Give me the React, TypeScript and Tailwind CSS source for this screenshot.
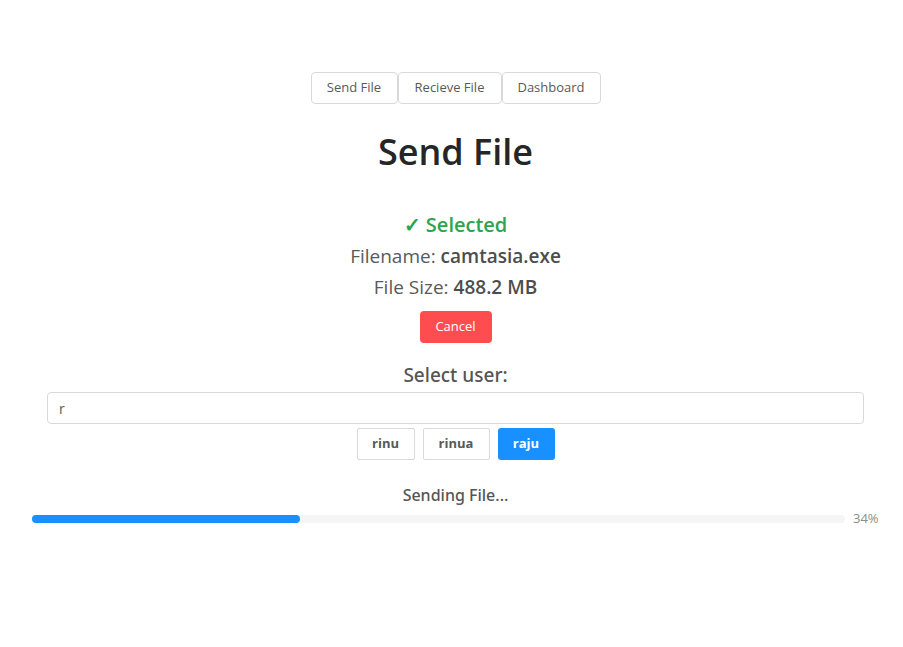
import React from "react";

export default function App() {
  const font = { fontFamily: '"Open Sans", "Noto Sans", sans-serif' };
  return (
    <div className="min-h-[647px] w-[903px] bg-white text-[#595959]" style={font}>
      <div className="flex flex-col items-center pl-[47px] pr-[39px] pt-[72px]">
        <div className="flex">
          <button className="h-[32px] w-[87px] rounded-[4px] border border-[#d9d9d9] bg-white text-[13px] text-[#595959]">Send File</button>
          <button className="h-[32px] w-[104px] rounded-[4px] border border-[#d9d9d9] bg-white text-[13px] text-[#595959]">Recieve File</button>
          <button className="h-[32px] w-[99px] rounded-[4px] border border-[#d9d9d9] bg-white text-[13px] text-[#595959]">Dashboard</button>
        </div>
        <h1 className="mt-[26px] text-[36px] font-semibold leading-[44px] text-[#262626]">Send File</h1>
        <div className="mt-[36px] text-[20px] font-semibold leading-[30px] text-[#2ea44f]">✓ Selected</div>
        <div className="mt-[1px] text-[19px] leading-[31px]">
          Filename: <span className="font-semibold text-[#4d4d4d]">camtasia.exe</span>
        </div>
        <div className="text-[19px] leading-[31px]">
          File Size: <span className="font-semibold text-[#4d4d4d]">488.2 MB</span>
        </div>
        <button className="mt-[8px] h-[32px] w-[72px] rounded-[4px] bg-[#ff4d4f] text-[13px] text-white">Cancel</button>
        <div className="mt-[18px] font-['Noto_Sans',sans-serif] text-[19px] font-medium leading-[28px] text-[#555]">Select user:</div>
        <div className="mt-[3px] w-full">
          <div className="flex h-[32px] w-full items-center rounded-[4px] border border-[#d9d9d9] px-[11px] text-[14px] text-[#595959]">r</div>
        </div>
        <div className="mt-[4px] flex gap-[8px]">
          <button className="h-[32px] w-[58px] rounded-[2px] border border-[#d9d9d9] bg-white text-[13px] font-bold text-[#595959]">rinu</button>
          <button className="h-[32px] w-[67px] rounded-[2px] border border-[#d9d9d9] bg-white text-[13px] font-bold text-[#595959]">rinua</button>
          <button className="h-[32px] w-[57px] rounded-[3px] bg-[#1890ff] text-[13px] font-bold text-white">raju</button>
        </div>
        <div className="mt-[23px] font-['Noto_Sans',sans-serif] text-[16px] font-medium leading-[24px] text-[#555]">Sending File...</div>
      </div>
      <div className="mt-[2px] flex w-full items-center pl-[32px] pr-[24px]">
        <div className="h-[8px] w-[813px] rounded-full bg-[#f5f5f5]">
          <div className="h-[8px] rounded-full bg-[#1890ff]" style={{ width: "33%" }} />
        </div>
        <span className="ml-[8px] text-[13px] text-[#8c8c8c]">34%</span>
      </div>
    </div>
  );
}
